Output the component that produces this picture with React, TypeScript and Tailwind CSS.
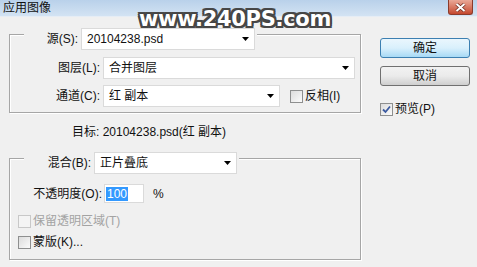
function Arrow() {
  return (
    <svg width="7" height="4" viewBox="0 0 7 4" className="shrink-0">
      <path d="M0 0H7L3.5 4Z" fill="#000" />
    </svg>
  );
}

function Select({ value, w }: { value: string; w: string }) {
  return (
    <div
      className={`${w} h-[22px] flex items-center justify-between bg-white border border-[#dadada] pl-[5px] pr-[5px] shrink-0`}
    >
      <span className="leading-[14px]">{value}</span>
      <Arrow />
    </div>
  );
}

function Check({ checked, disabled }: { checked?: boolean; disabled?: boolean }) {
  return (
    <div
      className={`w-[13px] h-[13px] shrink-0 border flex items-center justify-center ${
        disabled
          ? "border-[#c8c8c8] bg-[#f4f4f4]"
          : "border-[#8e8f8f] bg-linear-to-br from-[#dcdcdc] to-[#fbfbfb]"
      }`}
    >
      {checked && (
        <svg width="9" height="9" viewBox="0 0 9 9">
          <path d="M1 4.5L3.5 7L8 1.5" fill="none" stroke="#3b5aa0" strokeWidth="1.8" />
        </svg>
      )}
    </div>
  );
}

const groupBox =
  "border border-[#a6a6a6] shadow-[inset_1px_1px_0_#fff,1px_1px_0_#fff]";

export default function App() {
  return (
    <div className="relative w-[477px] h-[267px] overflow-hidden bg-[#f0f0f0] text-[12px] text-[#111] font-['Liberation_Sans','Noto_Sans_CJK_SC',sans-serif]">
      {/* title bar */}
      <div className="h-[17px] flex items-start justify-between bg-linear-to-b from-[#b9d1ea] to-[#d3e3f3] border-b border-[#e6edf5]">
        <span className="pl-[3px] pt-[1px] leading-[14px]">应用图像</span>
        <div className="mr-[4px] w-[25px] h-[15px] rounded-b-[3px] border border-t-0 border-[#8b3b2b] bg-linear-to-b from-[#e9a897] to-[#c4472e] flex items-center justify-center">
          <svg width="11" height="9" viewBox="0 0 11 9">
            <path d="M1.5 1L9.5 8M9.5 1L1.5 8" stroke="#6b2a1e" strokeWidth="3.4" />
            <path d="M1.5 1L9.5 8M9.5 1L1.5 8" stroke="#fff" strokeWidth="2" />
          </svg>
        </div>
      </div>

      {/* watermark */}
      <div className="absolute left-[139px] top-[9px] leading-none text-[21px] font-bold tracking-[-0.3px] text-white font-['DejaVu_Sans',sans-serif] [text-shadow:0_0_2px_#333,1px_1px_0_#4a4a4a,-1px_-1px_0_#4a4a4a,1px_-1px_0_#4a4a4a,-1px_1px_0_#4a4a4a,2px_0_0_#4a4a4a,-2px_0_0_#4a4a4a,0_2px_0_#4a4a4a,0_-2px_0_#4a4a4a,2px_2px_0_#4a4a4a,-2px_2px_0_#4a4a4a,2px_-2px_0_#4a4a4a,-2px_-2px_0_#4a4a4a]">
        www.240PS.com
      </div>

      <div className="flex">
        {/* left column */}
        <div className="ml-[9px] w-[352px] flex flex-col">
          {/* group 1 */}
          <div className={`mt-[17px] pb-[5px] ${groupBox}`}>
            <div className="-mt-[7px] ml-[14px] w-fit pr-[2px] flex items-center bg-[#f0f0f0]">
              <span className="w-[57px] pr-[3px] text-right leading-[14px]">源(S):</span>
              <Select value="20104238.psd" w="w-[174px]" />
            </div>
            <div className="mt-[7px] flex items-center">
              <span className="w-[93px] pr-[3px] text-right leading-[14px]">图层(L):</span>
              <Select value="合并图层" w="w-[252px]" />
            </div>
            <div className="mt-[6px] flex items-center">
              <span className="w-[93px] pr-[3px] text-right leading-[14px]">通道(C):</span>
              <Select value="红 副本" w="w-[177px]" />
              <div className="ml-[10px] flex items-center gap-[2px]">
                <Check />
                <span className="leading-[14px]">反相(I)</span>
              </div>
            </div>
          </div>

          <div className="mt-[12px] ml-[63px] leading-[14px]">目标: 20104238.psd(红 副本)</div>

          {/* group 2 */}
          <div className={`mt-[19px] pb-[10px] ${groupBox}`}>
            <div className="-mt-[7px] ml-[14px] w-fit pr-[2px] flex items-center bg-[#f0f0f0]">
              <span className="w-[70px] pr-[3px] text-right leading-[14px]">混合(B):</span>
              <Select value="正片叠底" w="w-[143px]" />
            </div>
            <div className="mt-[10px] flex items-center">
              <span className="w-[94px] pr-[2px] text-right leading-[14px]">不透明度(O):</span>
              <div className="w-[40px] h-[19px] bg-white border border-[#dadada] flex items-center pl-[1px]">
                <span className="bg-[#3399ff] text-white px-[1px] leading-[14px]">100</span>
              </div>
              <span className="ml-[9px] leading-[14px]">%</span>
            </div>
            <div className="mt-[11px] ml-[8px] flex items-center gap-[2px]">
              <Check disabled />
              <span className="leading-[14px] text-[#a3a3a3]">保留透明区域(T)</span>
            </div>
            <div className="mt-[7px] ml-[8px] flex items-center gap-[2px]">
              <Check />
              <span className="leading-[14px]">蒙版(K)...</span>
            </div>
          </div>
        </div>

        {/* right column */}
        <div className="ml-[19px] w-[90px] flex flex-col">
          <button className="mt-[21px] h-[20px] w-[90px] rounded-[3px] border border-[#3c7fb1] bg-linear-to-b from-[#eaf6fd] via-[#d9f0fc] to-[#a7d9f5] leading-[14px]">
            确定
          </button>
          <button className="mt-[8px] h-[20px] w-[90px] rounded-[3px] border border-[#707070] bg-linear-to-b from-[#f2f2f2] via-[#ebebeb] to-[#cfcfcf] leading-[14px]">
            取消
          </button>
          <div className="mt-[16px] flex items-center gap-[2px]">
            <Check checked />
            <span className="leading-[14px]">预览(P)</span>
          </div>
        </div>
      </div>
    </div>
  );
}
